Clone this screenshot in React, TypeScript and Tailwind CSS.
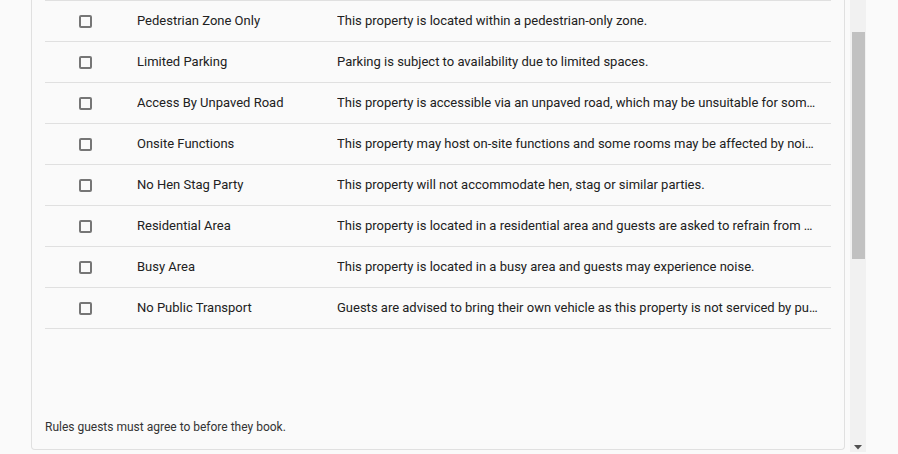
const rules = [
  { label: "Pedestrian Zone Only", text: "This property is located within a pedestrian-only zone." },
  { label: "Limited Parking", text: "Parking is subject to availability due to limited spaces." },
  { label: "Access By Unpaved Road", text: "This property is accessible via an unpaved road, which may be unsuitable for some vehicles." },
  { label: "Onsite Functions", text: "This property may host on-site functions and some rooms may be affected by noise." },
  { label: "No Hen Stag Party", text: "This property will not accommodate hen, stag or similar parties." },
  { label: "Residential Area", text: "This property is located in a residential area and guests are asked to refrain from making excessive noise." },
  { label: "Busy Area", text: "This property is located in a busy area and guests may experience noise." },
  { label: "No Public Transport", text: "Guests are advised to bring their own vehicle as this property is not serviced by public transport." },
];

function RuleRow({ label, text }: { readonly label: string; readonly text: string }) {
  return (
    <div className="grid h-[41px] grid-cols-[92px_200px_1fr] items-center border-b border-[#e0e0e0]">
      <div className="pl-[34px]">
        <span className="block size-[13px] rounded-[2px] border-2 border-[#767676]" />
      </div>
      <div className="truncate">{label}</div>
      <div className="truncate pr-[11px]" title={text}>{text}</div>
    </div>
  );
}

export default function App() {
  return (
    <div className="flex h-[454px] w-[898px] overflow-hidden bg-[#fafafa] font-['Roboto',sans-serif] text-[13px] text-[#212121]">
      <div className="w-[850px] pl-[31px] pr-[5px]">
        <div className="flex h-[450px] flex-col rounded-b-[4px] border-x border-b border-[#e0e0e0] px-[13px]">
          <div className="border-t border-[#e0e0e0]">
            {rules.map((r) => (
              <RuleRow key={r.label} label={r.label} text={r.text} />
            ))}
          </div>
          <p className="mt-auto pb-[14px] text-[12px] leading-[16px] text-[#333]">Rules guests must agree to before they book.</p>
        </div>
      </div>
      <div className="flex h-[452px] w-[16px] flex-col items-center bg-[#f1f1f1]">
        <div className="mt-[32px] h-[227px] w-[13px] bg-[#c1c1c1]" />
        <svg className="mt-auto mb-[2px]" width="8" height="5" viewBox="0 0 8 5" aria-hidden>
          <path d="M0 0h8L4 4.5z" fill="#505050" />
        </svg>
      </div>
      <div className="flex-1" />
    </div>
  );
}
